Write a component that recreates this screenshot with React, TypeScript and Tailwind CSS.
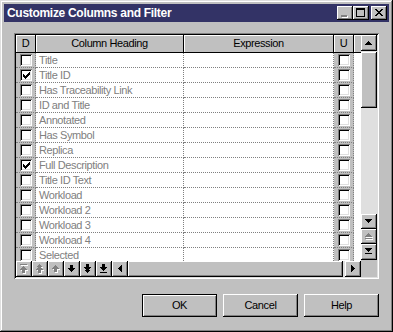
import React from "react";

type R = [number, number, number, number];

const raised = "bg-[#c0c0c0] shadow-[inset_-1px_-1px_0_#000,inset_1px_1px_0_#fff,inset_-2px_-2px_0_#808080]";
const dotted = "border-r border-b border-dotted border-[#808080]";

function Px({ rects, w = 16, h = 16, off = false }: { rects: R[]; w?: number; h?: number; off?: boolean }) {
  return (
    <svg width={w} height={h} viewBox={`0 0 ${w} ${h}`} shapeRendering="crispEdges" className="block">
      {off && rects.map(([x, y, rw, rh], i) => <rect key={"s" + i} x={x + 1} y={y + 1} width={rw} height={rh} fill="#fff" />)}
      {rects.map(([x, y, rw, rh], i) => (
        <rect key={i} x={x} y={y} width={rw} height={rh} fill={off ? "#808080" : "#000"} />
      ))}
    </svg>
  );
}

// toolbar glyphs, 16x16 grid
const toTop: R[] = [[4, 3, 7, 1], [7, 5, 1, 1], [6, 6, 3, 1], [5, 7, 5, 1], [4, 8, 7, 1], [6, 9, 3, 3]];
const pageUp: R[] = [[7, 3, 1, 1], [6, 4, 3, 1], [5, 5, 5, 1], [6, 6, 3, 1], [5, 7, 5, 1], [4, 8, 7, 1], [6, 9, 3, 3]];
const up: R[] = [[7, 4, 1, 1], [6, 5, 3, 1], [5, 6, 5, 1], [4, 7, 7, 1], [6, 8, 3, 3]];
const down: R[] = [[6, 4, 3, 3], [4, 7, 7, 1], [5, 8, 5, 1], [6, 9, 3, 1], [7, 10, 1, 1]];
const pageDown: R[] = [[6, 3, 3, 3], [4, 6, 7, 1], [5, 7, 5, 1], [6, 8, 3, 1], [5, 9, 5, 1], [6, 10, 3, 1], [7, 11, 1, 1]];
const toBottom: R[] = [[6, 3, 3, 3], [4, 6, 7, 1], [5, 7, 5, 1], [6, 8, 3, 1], [7, 9, 1, 1], [4, 11, 7, 1]];
const left: R[] = [[6, 7, 1, 1], [7, 6, 1, 3], [8, 5, 1, 5], [9, 4, 1, 7]];
const right: R[] = [[6, 4, 1, 7], [7, 5, 1, 5], [8, 6, 1, 3], [9, 7, 1, 1]];

// scrollbar glyphs
const sUp: R[] = [[7, 6, 1, 1], [6, 7, 3, 1], [5, 8, 5, 1], [4, 9, 7, 1]];
const sDown: R[] = [[4, 5, 7, 1], [5, 6, 5, 1], [6, 7, 3, 1], [7, 8, 1, 1]];
const sTop: R[] = [[7, 4, 1, 1], [6, 5, 3, 1], [5, 6, 5, 1], [4, 7, 7, 1], [4, 9, 7, 1]];
const sBottom: R[] = [[4, 4, 7, 1], [5, 5, 5, 1], [6, 6, 3, 1], [7, 7, 1, 1], [4, 9, 7, 1]];

const check: R[] = [[0, 2, 1, 3], [1, 3, 1, 3], [2, 4, 1, 3], [3, 3, 1, 3], [4, 2, 1, 3], [5, 1, 1, 3], [6, 0, 1, 3]];

const rows: [string, boolean][] = [
  ["Title", false],
  ["Title ID", true],
  ["Has Traceability Link", false],
  ["ID and Title", false],
  ["Annotated", false],
  ["Has Symbol", false],
  ["Replica", false],
  ["Full Description", true],
  ["Title ID Text", false],
  ["Workload", false],
  ["Workload 2", false],
  ["Workload 3", false],
  ["Workload 4", false],
  ["Selected", false],
];

function CheckBox({ on }: { on?: boolean }) {
  return (
    <div className="w-[12px] h-[12px] bg-white shadow-[inset_1px_1px_0_#808080,inset_-1px_-1px_0_#fff,inset_2px_2px_0_#000,inset_-2px_-2px_0_#dfdfdf]">
      {on && (
        <svg width="12" height="12" viewBox="0 0 12 12" shapeRendering="crispEdges" className="block">
          {check.map(([x, y, w, h], i) => <rect key={i} x={x + 3} y={y + 3} width={w} height={h} fill="#000" />)}
        </svg>
      )}
    </div>
  );
}

function TitleBtn({ rects, off, className = "" }: { rects: R[]; off?: boolean; className?: string }) {
  return (
    <div className={`w-[16px] h-[14px] ${raised} ${className}`}>
      <Px rects={rects} w={16} h={14} off={off} />
    </div>
  );
}

function Tool({ rects, off, h = "h-[16px]" }: { rects: R[]; off?: boolean; h?: string }) {
  return (
    <div className={`w-[16px] ${h} shrink-0 overflow-hidden ${raised}`}>
      <Px rects={rects} off={off} />
    </div>
  );
}

function HeadCell({ w, children }: { w: string; children?: React.ReactNode }) {
  return (
    <div className={`${w} h-full flex items-center justify-center border-r border-black shadow-[inset_1px_1px_0_#fff]`}>
      {children}
    </div>
  );
}

function DlgButton({ label, def }: { label: string; def?: boolean }) {
  return (
    <div
      className={`w-[75px] h-[23px] flex items-center justify-center bg-[#c0c0c0] ${
        def
          ? "border border-black shadow-[inset_1px_1px_0_#fff,inset_-1px_-1px_0_#808080]"
          : "shadow-[inset_-1px_-1px_0_#000,inset_1px_1px_0_#fff,inset_-2px_-2px_0_#808080]"
      }`}
    >
      {label}
    </div>
  );
}

export default function App() {
  return (
    <div className="w-[393px] h-[332px] flex flex-col p-[4px] bg-[#c0c0c0] text-[11px] tracking-[-0.4px] text-black font-['Liberation_Sans',Arial,sans-serif] shadow-[inset_-1px_-1px_0_#000,inset_1px_1px_0_#dfdfdf,inset_-2px_-2px_0_#808080,inset_2px_2px_0_#fff]">
      <div className="h-[18px] flex items-center justify-between bg-[#333366] pl-[3px] pr-[2px]">
        <span className="text-white font-bold text-[12px] tracking-[-0.3px]">Customize Columns and Filter</span>
        <div className="flex">
          <TitleBtn rects={[[4, 9, 6, 2]]} off />
          <TitleBtn rects={[[3, 2, 9, 2], [3, 4, 1, 6], [11, 4, 1, 6], [3, 10, 9, 1]]} />
          <TitleBtn
            className="ml-[2px]"
            rects={[
              [4, 3, 2, 1], [10, 3, 2, 1],
              [5, 4, 2, 1], [9, 4, 2, 1],
              [6, 5, 4, 1],
              [7, 6, 2, 1],
              [6, 7, 4, 1],
              [5, 8, 2, 1], [9, 8, 2, 1],
              [4, 9, 2, 1], [10, 9, 2, 1],
            ]}
          />
        </div>
      </div>

      <div className="flex-1 flex flex-col px-[10px] pt-[11px]">
        <div className="w-[365px] h-[246px] p-[2px] flex shadow-[inset_1px_1px_0_#808080,inset_-1px_-1px_0_#fff,inset_2px_2px_0_#000,inset_-2px_-2px_0_#dfdfdf]">
          <div className="w-[345px] flex flex-col">
            <div className="h-[18px] flex border-b border-black bg-[#c0c0c0]">
              <HeadCell w="w-[20px]">D</HeadCell>
              <HeadCell w="w-[148px]">Column Heading</HeadCell>
              <HeadCell w="w-[150px]">Expression</HeadCell>
              <HeadCell w="w-[20px]">U</HeadCell>
              <div className="w-[7px] h-full shadow-[inset_1px_1px_0_#fff]" />
            </div>

            <div className="h-[208px] overflow-hidden bg-white">
              {rows.map(([label, on]) => (
                <div key={label} className="flex h-[15px] shrink-0">
                  <div className={`w-[20px] flex items-center justify-center bg-[#c0c0c0] ${dotted}`}>
                    <CheckBox on={on} />
                  </div>
                  <div className={`w-[148px] pl-[3px] leading-[14px] text-[#808080] whitespace-nowrap ${dotted}`}>{label}</div>
                  <div className={`w-[150px] ${dotted}`} />
                  <div className={`w-[20px] flex items-center justify-center bg-[#c0c0c0] ${dotted}`}>
                    <CheckBox />
                  </div>
                  <div className="w-[7px]" />
                </div>
              ))}
            </div>

            <div className="h-[16px] flex bg-[#c0c0c0]">
              <Tool rects={toTop} off />
              <Tool rects={pageUp} off />
              <Tool rects={up} off />
              <Tool rects={down} />
              <Tool rects={pageDown} />
              <Tool rects={toBottom} />
              <Tool rects={left} />
              <div className="flex-1 flex bg-[#dfdfdf]">
                <div className={`flex-1 mr-[2px] ${raised}`} />
              </div>
              <Tool rects={right} />
            </div>
          </div>

          <div className="w-[16px] flex flex-col">
            <Tool rects={sUp} />
            <div className="flex-1 bg-[#dfdfdf] pt-[1px]">
              <div className={`h-[56px] ${raised}`} />
            </div>
            <Tool rects={sDown} h="h-[15px]" />
            <Tool rects={sTop} off h="h-[15px]" />
            <Tool rects={sBottom} />
            <div className="h-[17px] bg-[#c0c0c0]" />
          </div>
        </div>

        <div className="flex justify-end gap-[6px] mt-[15px] w-[365px]">
          <DlgButton label="OK" def />
          <DlgButton label="Cancel" />
          <DlgButton label="Help" />
        </div>
      </div>
    </div>
  );
}
